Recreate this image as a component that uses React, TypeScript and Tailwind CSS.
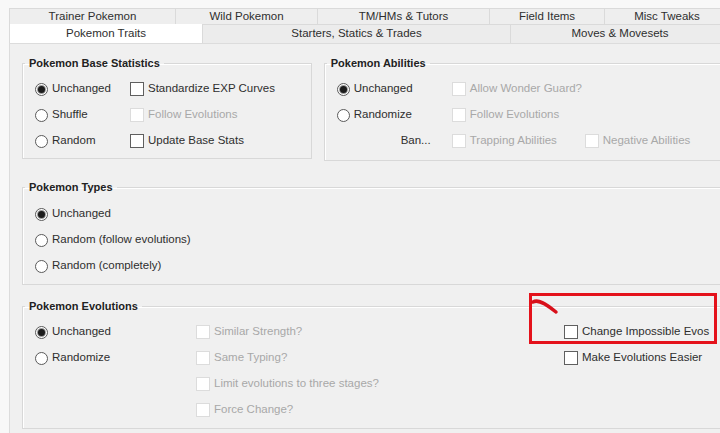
import React from "react";

function Radio({ label, checked = false }: { label: string; checked?: boolean }) {
  return (
    <div className="flex items-center gap-[4px] h-[26px] whitespace-nowrap">
      <span className="w-[13px] h-[13px] rounded-full border border-[#5a5a5a] bg-white flex items-center justify-center shrink-0">
        {checked && <span className="w-[7px] h-[7px] rounded-full bg-[#1c1c1c] ring-1 ring-[#9a9a9a]" />}
      </span>
      <span>{label}</span>
    </div>
  );
}

function Check({ label, disabled = false }: { label: string; disabled?: boolean }) {
  return (
    <div className="flex items-center gap-[4px] h-[26px] whitespace-nowrap">
      <span
        className={
          disabled
            ? "w-[14px] h-[14px] border border-[#dcdcdc] bg-white shrink-0"
            : "w-[14px] h-[14px] border border-[#5f5f5f] bg-white shrink-0"
        }
      />
      <span className={disabled ? "text-[#a8a8a8]" : ""}>{label}</span>
    </div>
  );
}

function Group({ title, className, children }: { title: string; className: string; children: React.ReactNode }) {
  return (
    <fieldset className={"border border-[#d8d8d8] shadow-[inset_1px_1px_0_#ffffff] " + className}>
      <legend className="ml-[2px] px-[4px] text-[11px] leading-[12px] font-bold text-[#222] whitespace-nowrap">{title}</legend>
      {children}
    </fieldset>
  );
}

const topTabs = [
  { label: "Trainer Pokemon", w: "w-[166px]" },
  { label: "Wild Pokemon", w: "w-[142px]" },
  { label: "TM/HMs & Tutors", w: "w-[172px]" },
  { label: "Field Items", w: "w-[115px]" },
  { label: "Misc Tweaks", w: "w-[125px]" },
];

export default function App() {
  return (
    <div className="relative w-[720px] h-[433px] overflow-hidden bg-[#f8f8f8] pt-[8px] pl-[9px] font-['Liberation_Sans',sans-serif] text-[11.5px] text-[#2e2e2e]">
      {/* tab rows */}
      <div className="flex h-[16px] w-[730px]">
        {topTabs.map((t) => (
          <div
            key={t.label}
            className={t.w + " border-t border-l border-[#dadada] bg-[#eeeeee] flex items-center justify-center leading-none"}
          >
            {t.label}
          </div>
        ))}
      </div>
      <div className="flex h-[19px] w-[730px]">
        <div className="w-[193px] border-l border-[#dadada] bg-white flex items-center justify-center leading-none">
          Pokemon Traits
        </div>
        <div className="w-[308px] border-t border-l border-[#dadada] bg-[#ececec] flex items-center justify-center leading-none">
          Starters, Statics &amp; Trades
        </div>
        <div className="w-[229px] border-t border-l border-[#dadada] bg-[#ececec] flex items-center justify-center leading-none pr-[10px]">
          Moves &amp; Movesets
        </div>
      </div>

      {/* panel */}
      <div className="w-[730px] h-[400px] bg-[#f0f0f0] border-t border-l border-[#dcdcdc] pt-[13px] pl-[12px] flex flex-col">
        <div className="flex gap-[12px]">
          <Group title="Pokemon Base Statistics" className="w-[293px] h-[102px]">
            <div className="flex pt-[7px] pl-[12px]">
              <div className="w-[95px] flex flex-col">
                <Radio label="Unchanged" checked />
                <Radio label="Shuffle" />
                <Radio label="Random" />
              </div>
              <div className="flex flex-col">
                <Check label="Standardize EXP Curves" />
                <Check label="Follow Evolutions" disabled />
                <Check label="Update Base Stats" />
              </div>
            </div>
          </Group>
          <Group title="Pokemon Abilities" className="w-[420px] h-[104px]">
            <div className="grid grid-cols-[115px_133px_auto] pt-[7px] pl-[12px]">
              <Radio label="Unchanged" checked />
              <Check label="Allow Wonder Guard?" disabled />
              <div />
              <Radio label="Randomize" />
              <Check label="Follow Evolutions" disabled />
              <div />
              <div className="h-[26px] flex items-center justify-end pr-[21px]">Ban...</div>
              <Check label="Trapping Abilities" disabled />
              <Check label="Negative Abilities" disabled />
            </div>
          </Group>
        </div>

        <Group title="Pokemon Types" className="mt-[20px] w-[720px]">
          <div className="flex flex-col pt-[8px] pb-[5px] pl-[12px]">
            <Radio label="Unchanged" checked />
            <Radio label="Random (follow evolutions)" />
            <Radio label="Random (completely)" />
          </div>
        </Group>

        <Group title="Pokemon Evolutions" className="mt-[15px] w-[720px]">
          <div className="flex pt-[7px] pb-[5px] pl-[12px]">
            <div className="w-[161px] flex flex-col">
              <Radio label="Unchanged" checked />
              <Radio label="Randomize" />
            </div>
            <div className="w-[368px] flex flex-col">
              <Check label="Similar Strength?" disabled />
              <Check label="Same Typing?" disabled />
              <Check label="Limit evolutions to three stages?" disabled />
              <Check label="Force Change?" disabled />
            </div>
            <div className="flex flex-col">
              <Check label="Change Impossible Evos" />
              <Check label="Make Evolutions Easier" />
            </div>
          </div>
        </Group>
      </div>

      {/* red annotation */}
      <div className="absolute left-[529px] top-[293px] w-[188px] h-[51px] border-[3px] border-[#e4121b]" />
      <svg className="absolute left-[528px] top-[296px]" width="34" height="22" viewBox="0 0 34 22">
        <path d="M5 6 C 10 3, 17 7, 28 16" stroke="#d8101a" strokeWidth="3.5" fill="none" strokeLinecap="round" />
      </svg>
    </div>
  );
}
